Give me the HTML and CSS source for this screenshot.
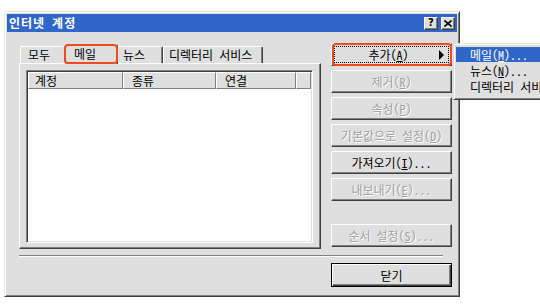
FILE: index.html
```html
<!DOCTYPE html>
<html lang="ko">
<head>
  <meta charset="UTF-8" />
  <title>인터넷 계정</title>
  <link rel="stylesheet" href="styles.css">
</head>
<body>

  <!-- dialog window -->
  <div class="window">
    <div class="titlebar">
      <span class="title">인터넷 계정</span>
      <div class="caption-btns">
        <span class="cbtn">?</span>
        <span class="cbtn">
          <svg width="8" height="7" viewBox="0 0 8 7"><path d="M0.5 0.5 L7.5 6.5 M7.5 0.5 L0.5 6.5" stroke="#000" stroke-width="1.6"/></svg>
        </span>
      </div>
    </div>

    <div class="content">
      <div class="main">
        <div class="tabs-area">
          <div class="tabs">
            <div class="tab tab-all">모두</div>
            <div class="tab tab-mail active marked">메일</div>
            <div class="tab tab-news">뉴스</div>
            <div class="tab tab-dir">디렉터리 서비스</div>
          </div>
          <div class="panel">
            <div class="list">
              <div class="list-head">
                <div class="col col-account">계정</div>
                <div class="col col-type">종류</div>
                <div class="col col-conn">연결</div>
                <div class="col col-rest"></div>
              </div>
            </div>
          </div>
        </div>

        <div class="buttons">
          <div class="btn btn-menu focused marked"><span class="btn-label">추가(<u>A</u>)</span><span class="arrow"></span></div>
          <div class="btn disabled">제거(<u>R</u>)</div>
          <div class="btn disabled">속성(<u>P</u>)</div>
          <div class="btn disabled">기본값으로 설정(<u>D</u>)</div>
          <div class="btn">가져오기(<u>I</u>)...</div>
          <div class="btn disabled">내보내기(<u>E</u>)...</div>
          <div class="btn disabled btn-order">순서 설정(<u>S</u>)...</div>
        </div>
      </div>

      <div class="sep"></div>

      <div class="bottom">
        <div class="btn default">닫기</div>
      </div>
    </div>
  </div>

  <!-- popup menu for 추가 -->
  <div class="menu">
    <div class="menu-item selected">메일(<u>M</u>)...</div>
    <div class="menu-item">뉴스(<u>N</u>)...</div>
    <div class="menu-item">디렉터리 서비스(<u>D</u>)...</div>
  </div>

</body>
</html>
```

FILE: styles.css
```css
html, body {
  margin: 0;
  padding: 0;
  overflow: hidden;
}

body {
  width: 540px;
  height: 307px;
  background: #fff;
  font-family: "Noto Sans Mono CJK KR", "Noto Sans CJK KR", "DejaVu Sans", sans-serif;
  font-size: 12px;
  color: #000;
  position: relative;
}

u {
  text-decoration: underline;
  text-underline-offset: 1px;
}

.window {
  box-sizing: border-box;
  margin: 11px 0 0 4px;
  width: 456px;
  height: 286px;
  background: #dfdfdf;
  border: 1px solid;
  border-color: #e6e6e6 #404040 #404040 #e6e6e6;
  box-shadow: inset 1px 1px 0 #fff, inset -1px -1px 0 #808080;
  padding: 2px;
  display: flex;
  flex-direction: column;
}

.titlebar {
  height: 18px;
  background: #3166c9;
  display: flex;
  align-items: center;
  justify-content: space-between;
  padding: 0 2px 0 2px;
}

.title {
  color: #fff;
  font-weight: bold;
  font-size: 12px;
  line-height: 18px;
  letter-spacing: 1px;
}

.caption-btns {
  display: flex;
  gap: 3px;
}

.cbtn {
  box-sizing: border-box;
  width: 14px;
  height: 13px;
  background: #dfdfdf;
  border: 1px solid;
  border-color: #fff #404040 #404040 #fff;
  box-shadow: inset -1px -1px 0 #808080;
  display: flex;
  align-items: center;
  justify-content: center;
  font-family: "DejaVu Sans", sans-serif;
  font-weight: bold;
  font-size: 10px;
  line-height: 1;
}

.content {
  flex: 1;
  display: flex;
  flex-direction: column;
  padding: 11px 5px 0 12px;
}

.main {
  display: flex;
  gap: 10px;
  height: 206px;
}

.tabs-area {
  width: 302px;
  display: flex;
  flex-direction: column;
}

.tabs {
  height: 20px;
  display: flex;
  align-items: flex-end;
  padding-left: 1px;
}

.tab {
  box-sizing: border-box;
  height: 17px;
  line-height: 15px;
  padding: 0 0 0 7px;
  border: 1px solid #fff;
  border-right-color: #404040;
  border-bottom: none;
  border-radius: 2px 2px 0 0;
  box-shadow: inset -1px 0 0 #808080;
  position: relative;
  white-space: nowrap;
}

.tab-all {
  width: 46px;
}

.tab-mail {
  width: 54px;
}

.tab-news {
  width: 46px;
  padding-left: 5px;
}

.tab-dir {
  width: 100px;
  padding-left: 5px;
}

.tab.active {
  height: 20px;
  line-height: 18px;
  margin: 0 -1px -1px -2px;
  padding-left: 9px;
  background: #dfdfdf;
  z-index: 1;
}

.marked::after {
  content: "";
  position: absolute;
  left: 0;
  top: -1px;
  right: -1px;
  bottom: -1px;
  border: 2px solid #f04a1e;
  border-radius: 4px;
  pointer-events: none;
}

.tab.active.marked::after {
  left: -1px;
  bottom: 0;
}

.panel {
  flex: 1;
  box-sizing: border-box;
  border: 1px solid;
  border-color: #fff #404040 #404040 #fff;
  box-shadow: inset -1px -1px 0 #808080;
  padding: 6px 7px 5px 6px;
  display: flex;
}

.list {
  flex: 1;
  background: #fff;
  border: 1px solid;
  border-color: #808080 #fff #fff #808080;
  box-shadow: inset 1px 1px 0 #404040, inset -1px -1px 0 #dfdfdf;
  padding: 1px;
}

.list-head {
  display: flex;
  height: 17px;
}

.col {
  box-sizing: border-box;
  background: #dfdfdf;
  border: 1px solid;
  border-color: #fff #808080 #808080 #fff;
  line-height: 15px;
  padding-left: 6px;
}

.col-account {
  width: 95px;
}

.col-type {
  width: 93px;
  padding-left: 8px;
}

.col-conn {
  width: 80px;
  padding-left: 8px;
}

.col-rest {
  flex: 1;
}

.buttons {
  width: 121px;
  display: flex;
  flex-direction: column;
  gap: 4px;
}

.btn {
  box-sizing: border-box;
  height: 23px;
  background: #dfdfdf;
  border: 1px solid;
  border-color: #fff #404040 #404040 #fff;
  box-shadow: inset -1px -1px 0 #808080;
  display: flex;
  align-items: center;
  justify-content: center;
  white-space: nowrap;
  position: relative;
}

.btn.disabled {
  color: #a0a0a0;
  text-shadow: 1px 1px 0 #fff;
}

.btn-menu {
  justify-content: space-between;
}

.btn-label {
  flex: 1;
  text-align: center;
  padding-left: 6px;
}

.arrow {
  width: 0;
  height: 0;
  border-left: 5px solid #000;
  border-top: 5px solid transparent;
  border-bottom: 5px solid transparent;
  margin-right: 7px;
}

.focused {
  outline: 1px dotted #000;
  outline-offset: -4px;
}

.btn-order {
  margin-top: 19px;
}

.sep {
  height: 0;
  margin: 6px 9px 0 0;
  border-top: 1px solid #808080;
  border-bottom: 1px solid #fff;
}

.bottom {
  display: flex;
  justify-content: flex-end;
  padding-top: 6px;
}

.btn.default {
  width: 121px;
  height: 24px;
  border: 1px solid #000;
  box-shadow: inset 1px 1px 0 #fff, inset -1px -1px 0 #404040, inset -2px -2px 0 #808080;
}

.menu {
  position: absolute;
  left: 453px;
  top: 43px;
  width: 110px;
  background: #dfdfdf;
  border: 1px solid;
  border-color: #dfdfdf #404040 #404040 #dfdfdf;
  box-shadow: inset 1px 1px 0 #fff, inset -1px -1px 0 #808080;
  padding: 3px 2px 4px 2px;
}

.menu-item {
  height: 15px;
  line-height: 15px;
  padding-left: 14px;
  white-space: nowrap;
  margin-bottom: 1px;
}

.menu-item.selected {
  background: #3166c9;
  color: #fff;
}
```
